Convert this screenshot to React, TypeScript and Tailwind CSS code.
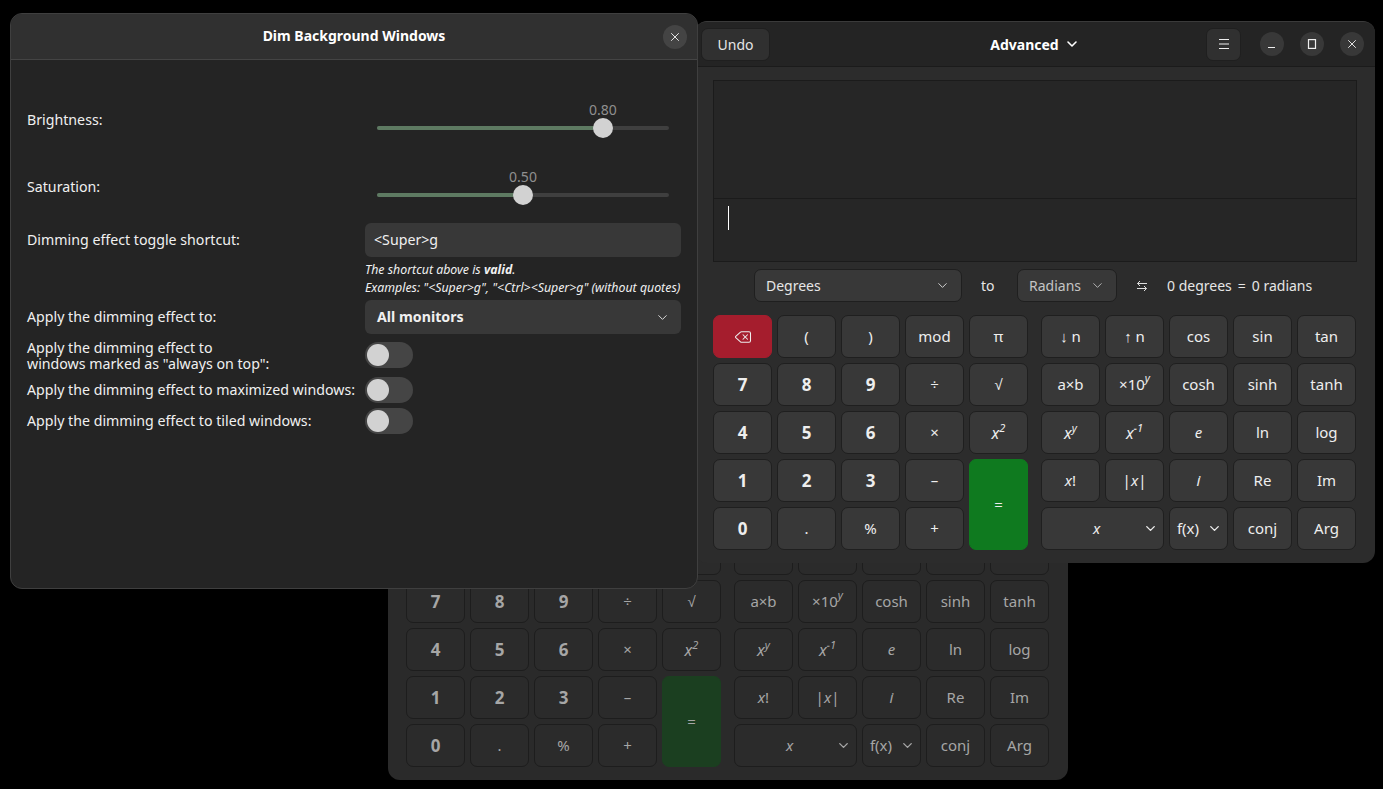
import { ChevronDown, Delete, X } from 'lucide-react';
import { createContext, useContext } from 'react';
import type { ReactNode } from 'react';

const font = 'font-["Noto_Sans",sans-serif]';

// true inside the calculator that the dimming effect is applied to
const DimContext = createContext(false);

function Sup({ base, exp }: { base: string; exp: string }) {
  return (
    <span className="italic text-[16px]">
      {base}
      <sup className="text-[11px] -top-[7px]">{exp}</sup>
    </span>
  );
}

function Key({
  children,
  tone = 'plain',
  bold = false,
  className = ''
}: {
  children: ReactNode;
  tone?: 'plain' | 'red' | 'green';
  bold?: boolean;
  className?: string;
}) {
  const dim = useContext(DimContext);
  let toneClass = dim ? 'bg-[#2b2b2b] border-[#1d1d1d] text-[#a6a6a6]' : 'bg-[#383838] border-[#1f1f1f] text-[#eeeeee]';
  if (tone === 'red') toneClass = 'bg-[#a51d2d] border-[#a51d2d] text-[#eeeeee]';
  if (tone === 'green') {
    toneClass = dim ? 'bg-[#1b3f20] border-[#1b3f20] text-[#a6a6a6]' : 'bg-[#0f7a1f] border-[#0f7a1f] text-[#eeeeee]';
  }
  return (
    <div
      className={`flex items-center justify-center rounded-[7px] border ${toneClass} ${
        bold ? 'text-[17px] font-bold' : 'text-[15px]'
      } ${className}`}
    >
      {children}
    </div>
  );
}

function CalcWindow({ dim = false, className = '' }: { dim?: boolean; className?: string }) {
  return (
    <DimContext.Provider value={dim}>
      <div
        className={`absolute w-[680px] h-[542px] rounded-xl overflow-hidden border-t border-[#3a3a3a] flex flex-col ${
          dim ? 'bg-[#2a2a2a]' : 'bg-[#2c2c2c]'
        } ${className}`}
      >
        {/* Header */}
        <div className="h-[45px] shrink-0 bg-[#242424] border-b border-[#1b1b1b] grid grid-cols-[1fr_auto_1fr] items-center px-[6px]">
          <div>
            <div className="w-[69px] h-[33px] rounded-[7px] bg-[#303030] border border-[#1f1f1f] flex items-center justify-center text-[14px] text-[#e6e6e6]">
              Undo
            </div>
          </div>
          <div className="flex items-center gap-[5px] text-[14px] font-bold text-white">
            Advanced
            <ChevronDown size={16} strokeWidth={2.4} />
          </div>
          <div className="flex items-center justify-end pr-[5px]">
            <div className="w-[35px] h-[33px] rounded-[7px] bg-[#303030] border border-[#1f1f1f] flex items-center justify-center mr-[19px]">
              <svg width="12" height="12" viewBox="0 0 12 12" stroke="#eeeeee" strokeWidth="1">
                <path d="M1 1.5h10M1 6h10M1 10.5h10" />
              </svg>
            </div>
            <div className="w-6 h-6 rounded-full bg-[#383838] flex items-center justify-center mr-4">
              <svg width="10" height="10" viewBox="0 0 10 10" stroke="#eeeeee" strokeWidth="1.2">
                <path d="M1 8.5h7" />
              </svg>
            </div>
            <div className="w-6 h-6 rounded-full bg-[#383838] flex items-center justify-center mr-4">
              <svg width="10" height="10" viewBox="0 0 10 10" fill="none" stroke="#eeeeee" strokeWidth="1.2">
                <rect x="1.5" y="0.6" width="7" height="8.8" />
              </svg>
            </div>
            <div className="w-6 h-6 rounded-full bg-[#383838] flex items-center justify-center">
              <X size={14} strokeWidth={1.6} color="#eeeeee" />
            </div>
          </div>
        </div>

        <div className="px-[18px] pt-[13px]">
          {/* Display */}
          <div className="h-[182px] border border-[#1b1b1b] bg-[#262626] flex flex-col">
            <div className="h-[118px] border-b border-[#1b1b1b]" />
            <div className="pl-[14px] pt-[7px]">
              <div className="w-px h-6 bg-white" />
            </div>
          </div>

          {/* Conversion row */}
          <div className="flex items-center h-[33px] mt-[7px] pl-[41px] text-[14px] text-[#e6e6e6]">
            <div className="w-[208px] h-[33px] rounded-[7px] bg-[#383838] border border-[#1f1f1f] flex items-center justify-between pl-[11px] pr-[11px]">
              Degrees
              <ChevronDown size={15} strokeWidth={1.4} />
            </div>
            <span className="ml-[19px] w-[36px]">to</span>
            <div className="w-[100px] h-[33px] rounded-[7px] bg-[#383838] border border-[#1f1f1f] flex items-center justify-between pl-[11px] pr-[11px] text-[#c4c4c4]">
              Radians
              <ChevronDown size={15} strokeWidth={1.4} />
            </div>
            <svg className="ml-[19px]" width="12" height="12" viewBox="0 0 12 12" fill="none" stroke="#dddddd" strokeWidth="1">
              <path d="M11 3.5H1.5M4 1 1.5 3.5 4 6M1 8.5h9.5M8 6l2.5 2.5L8 11" />
            </svg>
            <div className="ml-[19px] flex gap-[6px] whitespace-nowrap">
              <span>0 degrees</span>
              <span>=</span>
              <span>0 radians</span>
            </div>
          </div>

          {/* Keypad */}
          <div className="flex gap-[13px] mt-[13px]">
            <div className="grid grid-cols-[repeat(5,59px)] grid-rows-[repeat(5,43px)] gap-[5px]">
              <Key tone="red">
                <Delete size={18} strokeWidth={1.4} />
              </Key>
              <Key>(</Key>
              <Key>)</Key>
              <Key>mod</Key>
              <Key>π</Key>
              <Key bold>7</Key>
              <Key bold>8</Key>
              <Key bold>9</Key>
              <Key>÷</Key>
              <Key>√</Key>
              <Key bold>4</Key>
              <Key bold>5</Key>
              <Key bold>6</Key>
              <Key>×</Key>
              <Key>
                <Sup base="x" exp="2" />
              </Key>
              <Key bold>1</Key>
              <Key bold>2</Key>
              <Key bold>3</Key>
              <Key>–</Key>
              <Key tone="green" className="row-span-2">
                =
              </Key>
              <Key bold>0</Key>
              <Key>.</Key>
              <Key>%</Key>
              <Key>+</Key>
            </div>
            <div className="grid grid-cols-[repeat(5,59px)] grid-rows-[repeat(5,43px)] gap-[5px]">
              <Key>↓ n</Key>
              <Key>↑ n</Key>
              <Key>cos</Key>
              <Key>sin</Key>
              <Key>tan</Key>
              <Key>a×b</Key>
              <Key>
                ×10<sup className="italic text-[11px] -top-[7px]">y</sup>
              </Key>
              <Key>cosh</Key>
              <Key>sinh</Key>
              <Key>tanh</Key>
              <Key>
                <Sup base="x" exp="y" />
              </Key>
              <Key>
                <Sup base="x" exp="−1" />
              </Key>
              <Key>
                <span className="italic">e</span>
              </Key>
              <Key>ln</Key>
              <Key>log</Key>
              <Key>
                <span className="italic">x</span>!
              </Key>
              <Key>
                |<span className="italic">x</span>|
              </Key>
              <Key>
                <span className="italic">i</span>
              </Key>
              <Key>Re</Key>
              <Key>Im</Key>
              <Key className="col-span-2 relative pr-[12px]">
                <span className="italic">x</span>
                <ChevronDown size={15} strokeWidth={2.2} className="absolute right-[5px] top-[13px]" />
              </Key>
              <Key className="gap-[8px] pl-[2px]">
                f(x)
                <ChevronDown size={15} strokeWidth={2.2} />
              </Key>
              <Key>conj</Key>
              <Key>Arg</Key>
            </div>
          </div>
        </div>
      </div>
    </DimContext.Provider>
  );
}

function SliderRow({ label, value, className = '' }: { label: string; value: number; className?: string }) {
  // fill width follows the value, thumb travel is 266px on a 292px track
  const fill = 146 + (value - 0.5) * 266;
  return (
    <div className={`flex h-9 ${className}`}>
      <div className="w-[338px] flex items-center">
        <span className="translate-y-px">{label}</span>
      </div>
      <div className="pl-3 w-[304px]">
        <div className="relative w-[292px] h-9">
          <div className="absolute left-0 right-0 top-[25px] h-1 rounded-full bg-[#3f3f3f]" />
          <div className="absolute left-0 top-[25px] h-1 rounded-full bg-[#5e7a62]" style={{ width: fill }} />
          <div className="absolute top-[17px] w-5 h-5 rounded-full bg-[#d2d2d2]" style={{ left: fill - 10 }} />
          <div
            className="absolute top-0 h-[18px] w-10 text-center text-[14px] leading-[18px] text-[#8f8f8f]"
            style={{ left: fill - 20 }}
          >
            {value.toFixed(2)}
          </div>
        </div>
      </div>
    </div>
  );
}

function SwitchRow({ children, className = '' }: { children: ReactNode; className?: string }) {
  return (
    <div className={`flex items-center h-[26px] ${className}`}>
      <div className="w-[338px] leading-[16px] whitespace-nowrap">{children}</div>
      <div className="w-12 h-[26px] rounded-full bg-[#454545] p-[2px]">
        <div className="w-[22px] h-[22px] rounded-full bg-[#d2d2d2]" />
      </div>
    </div>
  );
}

function DimDialog() {
  return (
    <div className="absolute left-[10px] top-[13px] w-[688px] h-[576px] rounded-xl overflow-hidden bg-[#242424] border border-[#3f3f3f] flex flex-col text-[14.2px] text-[#f0f0f0]">
      <div className="relative h-[46px] shrink-0 bg-[#303030] border-b border-[#444444] flex items-center justify-center">
        <span className="font-bold text-[14px] text-white -translate-y-px">Dim Background Windows</span>
        <div className="absolute right-[10px] top-[11px] w-6 h-6 rounded-full bg-[#444444] flex items-center justify-center">
          <X size={14} strokeWidth={1.6} color="#f0f0f0" />
        </div>
      </div>
      <div className="pl-4 pt-[41px] flex flex-col">
        <SliderRow label="Brightness:" value={0.8} />
        <SliderRow label="Saturation:" value={0.5} className="mt-[31px]" />
        <div className="flex items-center h-[34px] mt-[19px]">
          <div className="w-[338px]">Dimming effect toggle shortcut:</div>
          <div className="w-[316px] h-[34px] rounded-[6px] bg-[#383838] flex items-center pl-[9px]">&lt;Super&gt;g</div>
        </div>
        <div className="pl-[338px] mt-[4px] text-[12.35px] leading-[18px] italic whitespace-nowrap">
          <div>
            The shortcut above is <b>valid</b>.
          </div>
          <div>Examples: "&lt;Super&gt;g", "&lt;Ctrl&gt;&lt;Super&gt;g" (without quotes)</div>
        </div>
        <div className="flex items-center h-[34px] mt-[3px]">
          <div className="w-[338px]">Apply the dimming effect to:</div>
          <div className="w-[316px] h-[34px] rounded-[6px] bg-[#383838] flex items-center justify-between pl-3 pr-[11px] font-bold">
            All monitors
            <ChevronDown size={15} strokeWidth={1.4} />
          </div>
        </div>
        <SwitchRow className="mt-2">
          <div className="translate-y-px">
            Apply the dimming effect to
            <br />
            windows marked as "always on top":
          </div>
        </SwitchRow>
        <SwitchRow className="mt-[9px]">Apply the dimming effect to maximized windows:</SwitchRow>
        <SwitchRow className="mt-[5px]">Apply the dimming effect to tiled windows:</SwitchRow>
      </div>
    </div>
  );
}

export default function App() {
  return (
    <div className={`relative w-[1383px] h-[789px] overflow-hidden bg-black ${font}`}>
      <CalcWindow dim className="left-[388px] top-[238px]" />
      <CalcWindow className="left-[695px] top-[21px]" />
      <DimDialog />
    </div>
  );
}
